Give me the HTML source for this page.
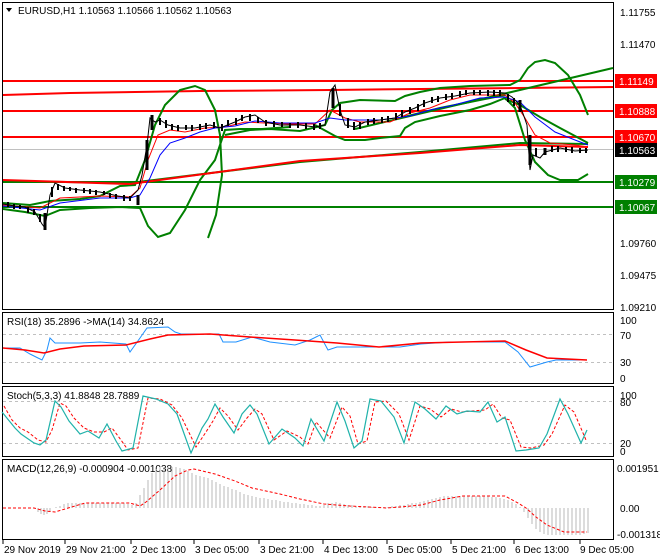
<!DOCTYPE html>
<html><head><meta charset="utf-8"><style>
body{margin:0;background:#fff;}
svg{display:block;font-family:"Liberation Sans",sans-serif;font-size:10px;}
</style></head><body>
<svg width="660" height="560" viewBox="0 0 660 560" xmlns="http://www.w3.org/2000/svg">
<rect width="660" height="560" fill="#fff"/>
<g fill="none" stroke="#000" stroke-width="1">
<rect x="2.5" y="2.5" width="611" height="307"/>
<rect x="2.5" y="312.5" width="611" height="71"/>
<rect x="2.5" y="386.5" width="611" height="70"/>
<rect x="2.5" y="459.5" width="611" height="80"/>
</g>
<g stroke="#000">
<line x1="3" y1="540" x2="3" y2="544"/><line x1="65" y1="540" x2="65" y2="544"/><line x1="131" y1="540" x2="131" y2="544"/><line x1="194" y1="540" x2="194" y2="544"/><line x1="259" y1="540" x2="259" y2="544"/><line x1="323" y1="540" x2="323" y2="544"/><line x1="387" y1="540" x2="387" y2="544"/><line x1="451" y1="540" x2="451" y2="544"/><line x1="514" y1="540" x2="514" y2="544"/><line x1="580" y1="540" x2="580" y2="544"/>
</g>
<g fill="#000">
<text x="4" y="553">29 Nov 2019</text><text x="66" y="553">29 Nov 21:00</text><text x="132" y="553">2 Dec 13:00</text><text x="195" y="553">3 Dec 05:00</text><text x="260" y="553">3 Dec 21:00</text><text x="324" y="553">4 Dec 13:00</text><text x="388" y="553">5 Dec 05:00</text><text x="452" y="553">5 Dec 21:00</text><text x="515" y="553">6 Dec 13:00</text><text x="580" y="553">9 Dec 05:00</text>
</g>
<g fill="#000">
<text x="620" y="16">1.11755</text><text x="620" y="48">1.11470</text><text x="620" y="247">1.09760</text><text x="620" y="279">1.09475</text><text x="620" y="311">1.09210</text>
<text x="620" y="324">100</text><text x="620" y="339">70</text><text x="620" y="366">30</text><text x="620" y="382">0</text>
<text x="620" y="399">100</text><text x="620" y="406">80</text><text x="620" y="447">20</text><text x="620" y="455">0</text>
<text x="617" y="472">0.001951</text><text x="620" y="512">0.00</text><text x="617" y="538">-0.001318</text>
</g>
<line x1="3" y1="149.5" x2="613" y2="149.5" stroke="#c0c0c0"/>
<g stroke="#f00" stroke-width="2" fill="none">
<line x1="3" y1="81" x2="613" y2="81"/>
<polyline points="3,95 70,93 200,91 330,90 420,89 613,87"/>
<line x1="3" y1="111" x2="613" y2="111"/>
<line x1="3" y1="137" x2="613" y2="137"/>
</g>
<g stroke="#008000" stroke-width="2" fill="none">
<line x1="3" y1="182" x2="613" y2="182"/>
<line x1="3" y1="207" x2="613" y2="207"/>
<line x1="355" y1="129" x2="613" y2="68"/>
<polyline points="400,118 440,108 480,100 505,95"/>
<polyline points="3,181 130,183 300,162 420,152 520,143 588,144"/>
<polyline points="3,203 30,205 50,201 80,199 100,196 120,186 135,185 145,160 155,125 165,105 180,90 195,86 205,90 215,110 220,135 222,175 216,215 208,238"/>
<polyline points="3,209 25,212 45,216 60,210 90,208 120,207 140,208 148,226 158,237 170,233 185,210 200,180 215,160 225,130 240,129 262,129 290,127"/>
<polyline points="225,135 250,130 270,129 300,131 325,125 332,110 340,103 360,100 395,101 405,96 420,92 440,88 470,86 510,85 520,80 528,68 535,62 545,60 555,63 568,75 580,95 588,115"/>
<polyline points="315,125 335,136 345,140 365,140 380,138 400,136 405,128 415,122 440,116 470,110 490,104 505,98 515,108 525,140 535,162 548,175 560,180 578,180 588,174"/>
<polyline points="505,99 520,105 540,117 560,128 575,136 588,143"/>
</g>
<g stroke="#f00" stroke-width="2" fill="none">
<polyline points="3,180 130,184 300,161 420,153 520,145 588,147"/>
</g>
<polyline fill="none" stroke="#f00" stroke-width="1" points="3,205 40,208 60,198 100,196 130,197 140,188 148,160 158,135 170,130 185,132 205,128 225,127 245,122 265,123 290,124 315,124 330,110 345,118 360,122 390,122 410,113 430,108 450,100 470,95 505,95 515,103 525,118 535,135 550,143 575,145 588,147"/>
<polyline fill="none" stroke="#00f" stroke-width="1" points="3,206 40,210 60,203 100,198 130,198 140,195 150,178 160,155 170,143 185,138 200,132 215,128 235,126 255,121 280,123 315,123 330,118 345,120 380,120 410,116 430,110 450,106 480,98 505,97 520,102 535,117 555,132 575,140 588,145"/>
<polyline fill="none" stroke="#000" stroke-width="1" points="3,204 15,206 25,207 35,212 42,224 45,228 50,195 55,183 65,188 80,190 100,192 118,196 130,198 138,190 142,175 147,145 150,118 155,122 160,120 168,125 180,128 195,128 210,125 220,128 235,122 245,117 255,115 265,122 280,125 300,125 315,127 325,125 330,92 335,85 340,110 345,125 355,127 365,122 380,120 395,118 405,112 415,108 425,103 440,98 455,96 470,93 490,92 505,93 512,97 520,105 527,125 530,170 533,155 540,158 545,152 560,148 575,151 588,150"/>
<!-- candle bodies -->
<path stroke="#000" stroke-width="2" fill="none" d="M8,202v5M14,204v5M20,205v4M28,207v6M34,209v6M40,214v8M52,187v10M58,184v6M64,186v5M70,187v4M76,188v5M84,188v5M90,189v5M96,190v5M104,191v4M110,193v5M116,194v5M124,195v6M130,196v5M160,118v7M166,120v8M172,124v6M178,125v6M186,125v5M192,125v6M200,124v6M206,123v6M214,122v6M222,124v7M228,120v6M236,118v7M242,115v6M250,114v7M258,117v6M266,120v6M274,121v6M282,122v5M290,123v5M298,122v6M306,123v6M314,124v6M320,123v6M340,104v12M348,118v10M354,122v8M360,122v7M368,119v6M374,118v6M382,117v6M388,116v6M396,113v7M402,110v7M410,107v7M418,104v7M424,100v7M432,97v6M438,96v6M446,94v6M452,93v6M460,91v6M466,90v5M474,90v5M480,90v5M488,90v6M494,90v6M500,90v6M508,94v8M514,98v8M536,148v8M552,146v6M558,146v6M566,147v5M572,147v6M580,148v5M586,148v5"/>
<g stroke="#000" stroke-width="3">
<line x1="45" y1="213" x2="45" y2="230"/><line x1="138" y1="195" x2="138" y2="205"/><line x1="147" y1="140" x2="147" y2="170"/><line x1="152" y1="115" x2="152" y2="130"/><line x1="333" y1="88" x2="333" y2="108"/><line x1="530" y1="135" x2="530" y2="165"/><line x1="520" y1="100" x2="520" y2="112"/><line x1="545" y1="148" x2="545" y2="155"/>
</g>
<g fill="#000"><text x="18" y="14" font-size="10">EURUSD,H1  1.10563 1.10566 1.10562 1.10563</text></g>
<path d="M6,8 L12,8 L9,12 Z" fill="#000"/>
<rect x="615" y="74" width="42" height="14" fill="#f00"/><text x="619" y="85" fill="#fff">1.11149</text>
<rect x="615" y="104" width="42" height="14" fill="#f00"/><text x="619" y="115" fill="#fff">1.10888</text>
<rect x="615" y="130" width="42" height="14" fill="#f00"/><text x="619" y="141" fill="#fff">1.10670</text>
<rect x="615" y="143" width="42" height="14" fill="#000"/><text x="619" y="154" fill="#fff">1.10563</text>
<rect x="615" y="175" width="42" height="14" fill="#008000"/><text x="619" y="186" fill="#fff">1.10279</text>
<rect x="615" y="200" width="42" height="14" fill="#008000"/><text x="619" y="211" fill="#fff">1.10067</text>
<!-- RSI -->
<g stroke="#c0c0c0" stroke-dasharray="3,3"><line x1="3" y1="334.5" x2="613" y2="334.5"/><line x1="3" y1="362.5" x2="613" y2="362.5"/></g>
<text x="7" y="325" fill="#000">RSI(18) 35.2896  -&gt;MA(14) 34.8624</text>
<polyline fill="none" stroke="#1e90ff" stroke-width="1" points="3,348 20,348 30,354 38,358 42,360 47,350 50,338 55,343 80,343 100,342 126,344 130,352 140,338 147,328 168,327 175,332 181,334 219,334 223,342 236,342 252,337 270,342 295,345 310,340 320,335 328,350 337,347 379,347 400,347 421,344 450,342 505,342 518,352 530,367 547,362 556,360 580,360"/>
<polyline fill="none" stroke="#f00" stroke-width="1.5" points="3,348 25,350 44,353 60,349 84,346 126,345 150,339 168,335 210,334 250,337 295,340 337,343 379,347 421,343 505,341 526,350 547,358 587,360"/>
<!-- Stoch -->
<g stroke="#c0c0c0" stroke-dasharray="3,3"><line x1="3" y1="401.5" x2="613" y2="401.5"/><line x1="3" y1="443.5" x2="613" y2="443.5"/></g>
<text x="7" y="399" fill="#000">Stoch(5,3,3) 41.8848 28.7889</text>
<polyline fill="none" stroke="#f00" stroke-width="1" stroke-dasharray="3,2" points="4,406 12,420 20,428 28,432 38,440 46,442 52,430 60,403 66,406 74,418 84,428 94,432 104,432 112,428 121,440 128,450 138,448 148,398 160,399 172,405 182,418 196,447 206,432 213,421 220,408 228,416 238,430 247,418 255,409 262,414 274,440 287,431 300,437 308,444 316,422 330,438 342,407 350,416 358,444 367,441 375,402 386,401 399,414 409,440 420,406 430,409 441,417 451,409 462,412 472,411 485,410 493,404 502,418 510,420 521,447 531,448 544,445 552,434 565,405 574,412 586,440"/>
<polyline fill="none" stroke="#20b2aa" stroke-width="1.2" points="2,412 15,428 21,434 34,443 40,445 46,440 55,401 61,407 69,421 80,434 88,431 99,438 107,424 116,441 122,451 133,448 143,396 156,399 168,404 177,414 191,453 202,428 208,419 215,404 223,417 234,433 242,414 250,405 257,414 269,444 282,429 295,438 303,446 311,419 324,441 337,402 345,421 354,448 362,441 370,399 381,401 394,417 404,443 415,402 425,409 436,419 446,406 457,414 467,411 480,412 488,402 497,422 505,417 516,451 526,450 539,448 547,434 560,399 568,414 581,443 587,430"/>
<!-- MACD -->
<text x="7" y="472" fill="#000">MACD(12,26,9) -0.000904 -0.001038</text>
<path fill="none" stroke="#b8b8b8" stroke-width="1" d="M38,508V512M41,508V514M44,508V515M47,508V514M50,508V511M56,508V507M60,508V506M64,508V504M68,508V503M72,508V503M76,508V503M80,508V503M84,508V503M88,508V503M92,508V503M96,508V503M100,508V503M104,508V503M108,508V503M112,508V503M116,508V503M120,508V503M124,508V503M128,508V504M132,508V505M136,508V503M140,508V495M144,508V488M148,508V480M152,508V473M156,508V469M160,508V467M164,508V467M168,508V467M172,508V467M176,508V467M180,508V468M184,508V469M188,508V471M192,508V473M196,508V475M200,508V476M204,508V477M208,508V478M212,508V480M216,508V482M220,508V484M224,508V486M228,508V487M232,508V489M236,508V490M240,508V492M244,508V494M248,508V495M252,508V496M256,508V497M260,508V498M264,508V498M268,508V499M272,508V500M276,508V500M280,508V501M284,508V502M288,508V502M292,508V503M296,508V503M300,508V504M304,508V504M308,508V505M312,508V505M316,508V506M320,508V506M324,508V505M328,508V503M332,508V503M336,508V502M340,508V503M344,508V504M348,508V505M352,508V505M356,508V506M360,508V506M364,508V506M368,508V506M372,508V507M376,508V507M380,508V507M384,508V507M388,508V507M392,508V506M396,508V506M400,508V505M404,508V505M408,508V504M412,508V503M416,508V503M420,508V502M424,508V501M428,508V500M432,508V499M436,508V498M440,508V497M444,508V496M448,508V496M452,508V496M456,508V496M460,508V496M464,508V496M468,508V496M472,508V496M476,508V496M480,508V496M484,508V496M488,508V496M492,508V497M496,508V497M500,508V498M504,508V499M508,508V500M512,508V502M516,508V504M520,508V507M524,508V512M528,508V518M532,508V524M536,508V529M540,508V532M544,508V534M548,508V535M552,508V535M556,508V535M560,508V535M564,508V535M568,508V535M572,508V535M576,508V535M580,508V535M584,508V534M588,508V533"/>
<polyline fill="none" stroke="#f00" stroke-width="1" stroke-dasharray="3,2" points="3,508 34,508 45,511 55,512 65,509 75,506 85,503 130,503 140,506 146,502 160,490 175,476 188,470 194,469 215,474 235,481 252,488 280,494 300,499 324,504 350,506 387,508 400,507 421,505 440,500 463,496 505,496 518,503 526,508 536,517 547,525 564,532 587,532"/>
</svg>
</body></html>
